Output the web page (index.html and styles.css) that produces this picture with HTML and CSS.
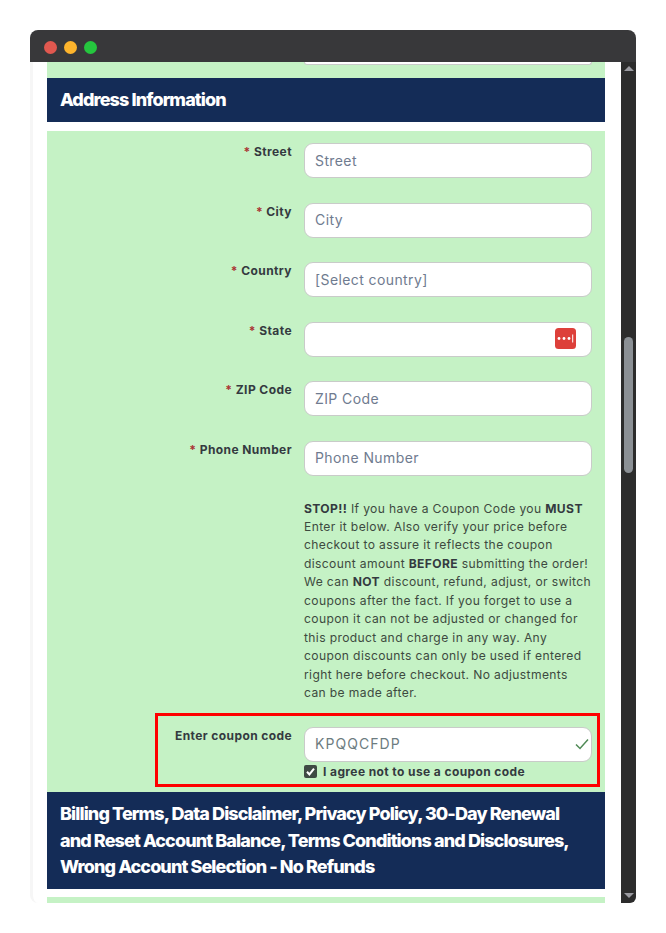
FILE: index.html
```html
<!DOCTYPE html>
<html lang="en">
<head>
<meta charset="utf-8">
<title>Address Information</title>
<link rel="stylesheet" href="styles.css">
</head>
<body>
<div class="window">
  <div class="titlebar">
    <span class="dot dot-red"></span>
    <span class="dot dot-yellow"></span>
    <span class="dot dot-green"></span>
  </div>
  <div class="viewport">
    <main class="page">
      <div class="strip-top"><div class="input-stub"></div></div>
      <h2 class="band band-address">Address Information</h2>
      <form class="panel">
        <div class="row">
          <label class="label"><span class="req">*</span> Street</label>
          <input class="input" placeholder="Street">
        </div>
        <div class="row">
          <label class="label"><span class="req">*</span> City</label>
          <input class="input" placeholder="City">
        </div>
        <div class="row">
          <label class="label"><span class="req">*</span> Country</label>
          <select class="input select"><option>[Select country]</option></select>
        </div>
        <div class="row">
          <label class="label"><span class="req">*</span> State</label>
          <div class="input-wrap">
            <input class="input">
            <svg class="lastpass" viewBox="0 0 21 21" aria-hidden="true">
              <rect width="21" height="21" rx="3.5" fill="#dd403a"/>
              <circle cx="4" cy="10.5" r="1.4" fill="#fff"/>
              <circle cx="9" cy="10.5" r="1.4" fill="#fff"/>
              <circle cx="14" cy="10.5" r="1.4" fill="#fff"/>
              <rect x="17.2" y="6.5" width="1" height="8" fill="#fff"/>
            </svg>
          </div>
        </div>
        <div class="row">
          <label class="label"><span class="req">*</span> ZIP Code</label>
          <input class="input" placeholder="ZIP Code">
        </div>
        <div class="row">
          <label class="label"><span class="req">*</span> Phone Number</label>
          <input class="input" placeholder="Phone Number">
        </div>
        <p class="notice"><b>STOP!!</b> If you have a Coupon Code you <b>MUST</b><br>Enter it below. Also verify your price before<br>checkout to assure it reflects the coupon<br>discount amount <b>BEFORE</b> submitting the order!<br>We can <b>NOT</b> discount, refund, adjust, or switch<br>coupons after the fact. If you forget to use a<br>coupon it can not be adjusted or changed for<br>this product and charge in any way. Any<br>coupon discounts can only be used if entered<br>right here before checkout. No adjustments<br>can be made after.</p>
        <div class="coupon">
          <label class="label coupon-label">Enter coupon code</label>
          <div class="coupon-field">
            <div class="input-wrap">
              <input class="input input-code" value="KPQQCFDP">
              <svg class="check" viewBox="0 0 14 12" aria-hidden="true">
                <path d="M1 6.5 L5 10.5 L13 1.5" fill="none" stroke="#4f8a55" stroke-width="1.5"/>
              </svg>
            </div>
            <label class="agree">
              <span class="box">
                <svg viewBox="0 0 13 13" aria-hidden="true"><path d="M3 6.8 L5.4 9.4 L10 3.6" fill="none" stroke="#fff" stroke-width="2"/></svg>
              </span>
              I agree not to use a coupon code
            </label>
          </div>
        </div>
      </form>
      <h2 class="band band-terms">Billing Terms, Data Disclaimer, Privacy Policy, 30-Day Renewal<br>and Reset Account Balance, Terms Conditions and Disclosures,<br>Wrong Account Selection - No Refunds</h2>
      <div class="strip-bottom"></div>
    </main>
    <div class="scrollbar">
      <span class="arrow arrow-up"></span>
      <div class="track"><div class="thumb"></div></div>
      <span class="arrow arrow-down"></span>
    </div>
  </div>
</div>
</body>
</html>
```
FILE: styles.css
```css
* { box-sizing: border-box; }
html, body { margin: 0; height: 100%; background: #fff; overflow: hidden; }
body { padding: 30px 30px 30px; font-family: Inter, "Noto Sans", sans-serif; color: #343a40; }

.window { width: 606px; height: 873px; display: flex; flex-direction: column; }
.titlebar {
  height: 32px; flex: none; background: #38383a; border-radius: 8px 8px 0 0;
  display: flex; align-items: center; gap: 7px; padding: 2px 0 0 14px;
}
.dot { width: 13px; height: 13px; border-radius: 50%; }
.dot-red { background: #e0584f; }
.dot-yellow { background: #fdb42c; }
.dot-green { background: #25c63e; }

.viewport { flex: 1; min-height: 0; display: flex; background: #fff; }
.page {
  flex: 1; min-width: 0; padding: 0 16px 0 14px;
  border-left: 3px solid #f6f6f6; border-bottom-left-radius: 8px;
}
.strip-top { height: 16px; background: #c5f2c5; padding: 0 13px 0 257px; }
.input-stub {
  height: 3px; background: #fff; border: 1px solid #c9cbc9; border-top: 0;
  border-radius: 0 0 8px 8px;
}
.band { margin: 0; background: #142c57; color: #fff; font-weight: 800; }
.band-address { height: 44px; padding: 0 13px; font-size: 18px; line-height: 43px; letter-spacing: -0.9px; }
.band-terms { height: 97px; padding: 9px 13px 0; font-size: 18px; line-height: 26.6px; letter-spacing: -0.9px; }

.panel { margin-top: 9px; height: 661px; background: #c5f2c5; padding-top: 12px; }
.row {
  height: 59.6px; display: grid; grid-template-columns: 245px 288px; column-gap: 12px;
  align-items: start;
}
.label {
  text-align: right; font-size: 12px; font-weight: 700; line-height: 18px; color: #343a40;
  letter-spacing: 0.42px; white-space: nowrap;
}
.req { color: #a33; }
.input-wrap { position: relative; width: 288px; height: 35px; }
.input {
  display: block; width: 288px; height: 35px; margin: 0; padding: 0 10px 1px;
  font: 400 14px Inter, "Noto Sans", sans-serif; letter-spacing: 0.4px; color: #6d7c80; background: #fff;
  border: 1px solid #c9cbc9; border-radius: 9px; outline: 0; appearance: none;
}
.input::placeholder { color: #6f7b8f; opacity: 1; }
.select { color: #6f7b8f; }
.input-code { letter-spacing: 1.05px; }
.lastpass { position: absolute; left: 251px; top: 6px; width: 21px; height: 21px; }
.check { position: absolute; right: 3px; top: 11px; width: 14px; height: 12px; }

.notice {
  margin: -1px 0 0 257px; height: 213.4px;
  font-size: 12.1px; line-height: 18.45px; letter-spacing: 0.37px; color: #3d4a40; white-space: nowrap;
}
.notice b { color: #343a40; font-weight: 700; }

.coupon {
  margin-left: 108px; width: 445px; height: 74px; border: 3px solid #f00;
  padding-top: 11px; display: grid; grid-template-columns: 134px 288px; column-gap: 12px; align-items: start;
}
.coupon-label { letter-spacing: 0.4px; }
.agree {
  display: flex; align-items: center; gap: 6px; margin-top: 3px; height: 13px;
  font-size: 12px; font-weight: 700; letter-spacing: 0.4px; color: #343a40; white-space: nowrap;
}
.box { width: 13px; height: 13px; background: #3f4a44; border-radius: 2px; flex: none; }
.box svg { display: block; width: 13px; height: 13px; }

.strip-bottom { margin-top: 8px; height: 6px; background: #c5f2c5; }

.scrollbar { width: 15px; flex: none; background: #2c2c2c; display: flex; flex-direction: column; border-bottom-right-radius: 6px; }
.arrow { flex: none; width: 0; height: 0; margin: 0 auto; border-left: 5px solid transparent; border-right: 5px solid transparent; }
.arrow-up { margin-top: 4px; border-bottom: 5px solid #9a9aa0; }
.arrow-down { margin-bottom: 5px; border-top: 5px solid #9a9aa0; }
.track { flex: 1; min-height: 0; padding: 266px 3px 0; }
.thumb { height: 136px; border-radius: 5px; background: #8b9095; }
```
